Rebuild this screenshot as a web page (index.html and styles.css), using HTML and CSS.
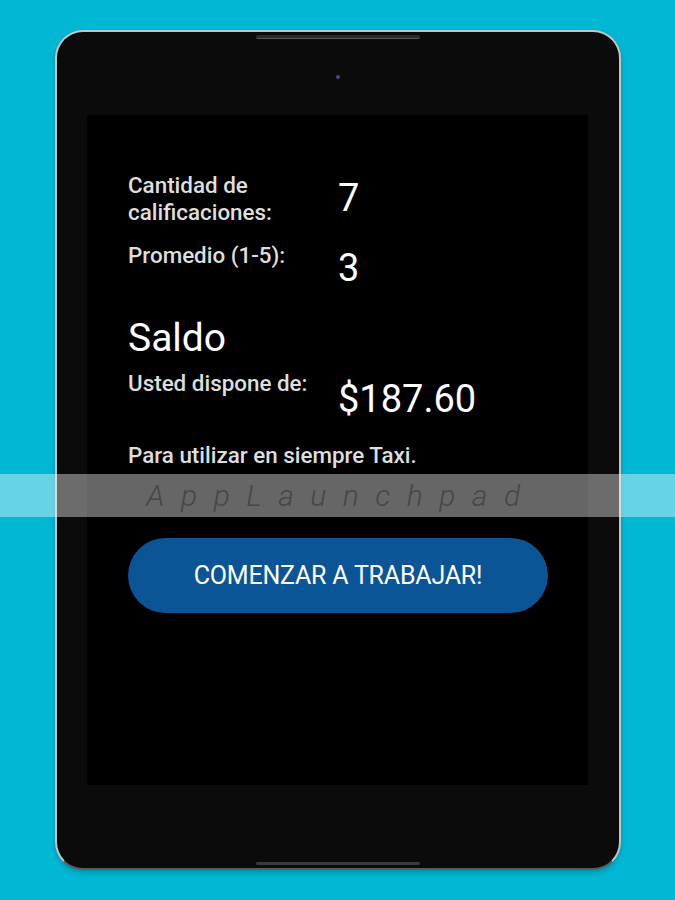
FILE: index.html
```html
<!DOCTYPE html>
<html lang="es">
<head>
    <meta charset="UTF-8">
    <meta name="viewport" content="width=device-width, initial-scale=1.0">
    <title>Siempre Taxi - Conductor</title>
    <link rel="stylesheet" href="styles.css">
</head>
<body>
    <div class="tablet">
        <span class="slit slit-top"></span>
        <span class="camera"></span>
        <div class="screen">
            <div class="stats">
                <span class="label">Cantidad de<br>calificaciones:</span>
                <span class="value">7</span>
                <span class="label">Promedio (1-5):</span>
                <span class="value">3</span>
            </div>
            <h2 class="title">Saldo</h2>
            <div class="stats balance">
                <span class="label">Usted dispone de:</span>
                <span class="value">$187.60</span>
            </div>
            <p class="note">Para utilizar en siempre Taxi.</p>
            <button class="start">COMENZAR A TRABAJAR!</button>
        </div>
        <span class="slit slit-bottom"></span>
    </div>
    <div class="watermark">AppLaunchpad</div>
</body>
</html>
```

FILE: styles.css
```css
body {
    margin: 0;
    height: 900px;
    background-color: #00b8d4;
    font-family: Roboto, "Liberation Sans", sans-serif;
    overflow: hidden;
    position: relative;
}
.tablet {
    position: relative;
    width: 501px;
    height: 670px;
    margin: 30px 0 0 55px;
    padding: 83px 31px 83px 30px;
    background: #0b0b0b;
    border: 2px solid #c4c4c4;
    border-bottom-color: #5a5a5a;
    border-radius: 28px;
    box-shadow: 0 3px 5px rgba(0, 0, 0, 0.2);
}
.slit {
    position: absolute;
    left: 199px;
    width: 164px;
    height: 3px;
    background: #2a2a2a;
    border-radius: 2px;
}
.slit-top {
    top: 3px;
    border-bottom: 1px solid #555;
}
.slit-bottom {
    bottom: 3px;
    background: #3a3a3a;
}
.camera {
    position: absolute;
    top: 43px;
    left: 279px;
    width: 4px;
    height: 4px;
    border-radius: 50%;
    background: #4a4a7a;
}
.screen {
    height: 670px;
    background: #000;
    padding: 57px 40px 0 41px;
    box-sizing: border-box;
    color: #e6e6e6;
}
.stats {
    display: grid;
    grid-template-columns: 210px 1fr;
    row-gap: 16px;
}
.label {
    font-size: 22.4px;
    font-weight: 500;
    line-height: 27px;
    color: #dedede;
}
.value {
    font-size: 38px;
    line-height: 38px;
    margin-top: 7px;
    color: #fff;
}
.title {
    margin: 28px 0 0;
    font-size: 39px;
    font-weight: 400;
    line-height: 46px;
    color: #fff;
}
.balance {
    margin-top: 9px;
}
.balance .value {
    margin-top: 10px;
}
.note {
    margin: 24px 0 0;
    font-size: 22.4px;
    font-weight: 500;
    line-height: 27px;
    color: #dedede;
}
.start {
    display: block;
    width: 420px;
    height: 75px;
    margin-top: 69px;
    border: none;
    border-radius: 38px;
    background: #0b5596;
    color: #fff;
    font-family: Roboto, "Liberation Sans", sans-serif;
    font-size: 25px;
    letter-spacing: -0.2px;
}
.watermark {
    position: absolute;
    top: 474px;
    left: 0;
    right: 0;
    height: 43px;
    background: rgba(255, 255, 255, 0.4);
    color: #474747;
    font-family: Roboto, sans-serif;
    font-style: italic;
    font-weight: 300;
    font-size: 30px;
    line-height: 43px;
    letter-spacing: 16.5px;
    text-align: center;
    padding-left: 8px;
}
```
